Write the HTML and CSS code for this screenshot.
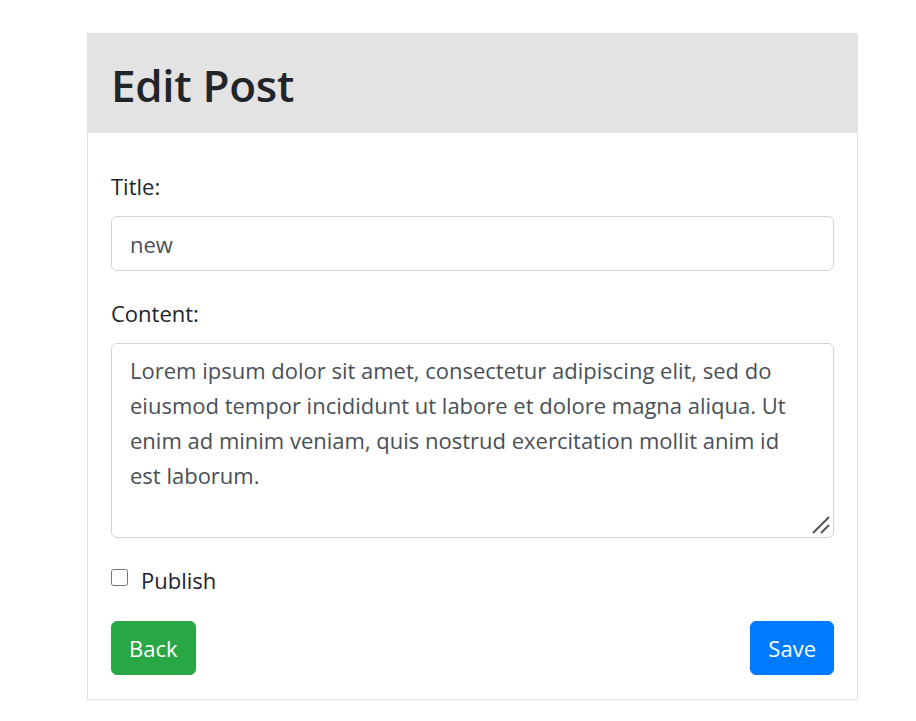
FILE: index.html
```html
<!DOCTYPE html>
<html>
<head>
<meta charset="utf-8">
<link rel="stylesheet" href="styles.css">
</head>
<body>
<div class="card">
  <div class="card-header">
    <h2 class="title">Edit Post</h2>
  </div>
  <div class="card-body">
    <form class="form">
      <div class="group">
        <label class="label" for="t">Title:</label>
        <input class="control" id="t" type="text" value="new">
      </div>
      <div class="group">
        <label class="label" for="c">Content:</label>
        <div class="area-wrap">
          <textarea class="control area" id="c">Lorem ipsum dolor sit amet, consectetur adipiscing elit, sed do eiusmod tempor incididunt ut labore et dolore magna aliqua. Ut enim ad minim veniam, quis nostrud exercitation mollit anim id est laborum.</textarea>
          <svg class="grip" width="20" height="20" viewBox="0 0 20 20">
            <line x1="2" y1="18" x2="18" y2="2" stroke="#555" stroke-width="2"/>
            <line x1="10" y1="18" x2="18" y2="10" stroke="#555" stroke-width="2"/>
          </svg>
        </div>
      </div>
      <div class="group check">
        <input class="check-input" id="p" type="checkbox">
        <label class="check-label" for="p">Publish</label>
      </div>
      <div class="actions">
        <button type="button" class="btn btn-back">Back</button>
        <button type="button" class="btn btn-save">Save</button>
      </div>
    </form>
  </div>
</div>
</body>
</html>
```

FILE: styles.css
```css
html, body {
  margin: 0;
  padding: 0;
  background: #fff;
}
body {
  font-family: "Open Sans", "Noto Sans", sans-serif;
  font-size: 22px;
  line-height: 36px;
  color: #212529;
  padding: 33px 58px 0 87px;
}
.card {
  width: 771px;
  border: 1px solid #dfdfdf;
  border-top: none;
  box-sizing: border-box;
  background: #fff;
}
.card-header {
  background: #e3e3e3;
  height: 100px;
  margin: 0 -1px;
  padding: 0 24px;
  display: flex;
  align-items: center;
  box-sizing: border-box;
}
.title {
  margin: 0;
  font-size: 44px;
  font-weight: 600;
  line-height: 1;
  color: #212529;
  position: relative;
  top: 2px;
  letter-spacing: -0.3px;
}
.card-body {
  padding: 35px 23px 24px 23px;
}
.group {
  margin-bottom: 24px;
}
.label {
  display: block;
  margin-bottom: 12px;
  line-height: 36px;
}
.control {
  display: block;
  width: 100%;
  box-sizing: border-box;
  height: 55px;
  padding: 8px 18px;
  font-family: inherit;
  font-size: 22px;
  line-height: 36px;
  color: #495057;
  background: #fff;
  border: 1px solid #ced4da;
  border-radius: 6px;
  margin: 0;
}
.area-wrap {
  position: relative;
}
.area {
  height: 195px;
  padding-top: 9px;
  line-height: 35px;
  resize: none;
}
.grip {
  position: absolute;
  right: 3px;
  bottom: 3px;
}
.check {
  display: flex;
  align-items: center;
  height: 36px;
  margin-bottom: 23px;
}
.check-input {
  width: 17px;
  height: 17px;
  margin: 0 13px 0 0;
  position: relative;
  top: -3px;
}
.check-label {
  line-height: 36px;
}
.actions {
  display: flex;
  justify-content: space-between;
}
.btn {
  font-family: inherit;
  font-size: 22px;
  line-height: 36px;
  padding: 8px 17px;
  border: 1px solid transparent;
  border-radius: 6px;
  color: #fff;
  cursor: pointer;
}
.btn-back {
  background: #28a745;
  border-color: #28a745;
}
.btn-save {
  background: #007bff;
  border-color: #007bff;
}
```
